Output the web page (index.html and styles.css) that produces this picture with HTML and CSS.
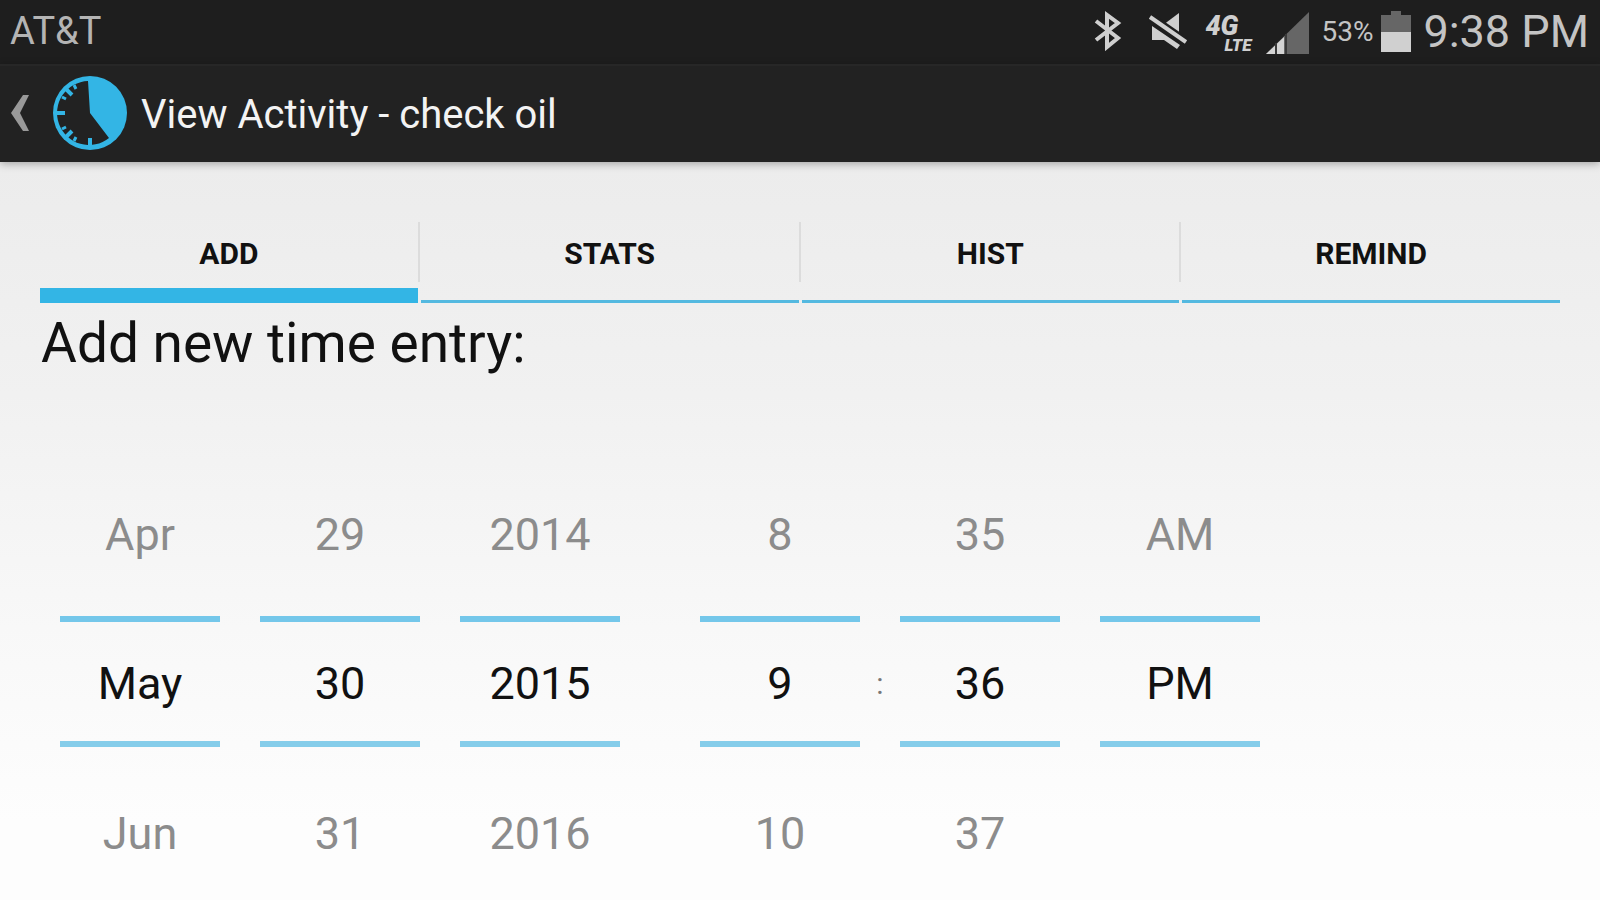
FILE: index.html
```html
<!DOCTYPE html>
<html lang="en">
<head>
    <meta charset="UTF-8">
    <meta name="viewport" content="width=device-width, initial-scale=1.0">
    <title>View Activity - check oil</title>
    <link rel="stylesheet" href="styles.css">
</head>
<body>
    <div class="status-bar">
        <span class="carrier">AT&amp;T</span>
        <div class="status-icons">
            <svg class="icon-bluetooth" width="28" height="40" viewBox="0 0 28 40" aria-label="Bluetooth">
                <path d="M2 10 L24 27 L13 36 L13 4 L24 12 L2 29" fill="none" stroke="#cfcfcf" stroke-width="4"/>
            </svg>
            <svg class="icon-mute" width="40" height="40" viewBox="0 0 40 40" aria-label="Muted">
                <path d="M15 14 L31 2 V24 Z" fill="#cfcfcf"/>
                <path d="M4 15 L32 34 L29 38 L16 29 H4 Z" fill="#cfcfcf"/>
                <path d="M2 6 L38 31" stroke="#1e1e1e" stroke-width="9"/>
                <path d="M2 6 L38 31" stroke="#cfcfcf" stroke-width="4"/>
            </svg>
            <div class="icon-lte">
                <span class="lte-big">4G</span>
                <span class="lte-small">LTE</span>
            </div>
            <svg class="icon-signal" width="43" height="42" viewBox="0 0 43 42" aria-label="Signal">
                <path d="M0 42 L43 0 V42 Z" fill="#666"/>
                <path d="M0 42 L18 25 V42 Z" fill="#d4d4d4"/>
                <path d="M10 31 V42 M20 22 V42" stroke="#3a3a3a" stroke-width="2"/>
            </svg>
            <span class="battery-level">53%</span>
            <svg class="icon-battery" width="30" height="44" viewBox="0 0 30 44" aria-label="Battery">
                <path d="M0 6 H10 V2 H20 V6 H30 V24 H0 Z" fill="#666"/>
                <path d="M0 23 H30 V43 H0 Z" fill="#d0d0d0"/>
            </svg>
            <span class="clock">9:38 PM</span>
        </div>
    </div>

    <header class="action-bar">
        <a href="#" class="up-link" aria-label="Navigate up">
            <svg width="20" height="40" viewBox="0 0 20 40">
                <path d="M13 2 H19 L10 20 L19 38 H13 L1 20 Z" fill="#999"/>
            </svg>
            <svg width="76" height="76" viewBox="0 0 76 76">
                <circle cx="38" cy="38" r="37" fill="#33b5e5"/>
                <path d="M38 38 L36 6 A32 32 0 1 0 57 63 Z" fill="#222"/>
                <path d="M38 71 V63 M14 62 L20 56 M5 38 H13 M14 14 L20 20" stroke="#33b5e5" stroke-width="4"/>
                <path d="M22 66 L24 62 M10 54 L14 52 M10 22 L14 24 M22 10 L24 14" stroke="#33b5e5" stroke-width="3"/>
            </svg>
        </a>
        <h1>View Activity - check oil</h1>
    </header>

    <main>
        <nav class="tabs">
            <button class="tab active" type="button">ADD</button>
            <button class="tab" type="button">STATS</button>
            <button class="tab" type="button">HIST</button>
            <button class="tab" type="button">REMIND</button>
        </nav>

        <h2>Add new time entry:</h2>

        <form class="pickers">
            <div class="picker-group">
                <div class="picker">
                    <button type="button">Apr</button>
                    <input type="text" value="May" aria-label="Month">
                    <button type="button">Jun</button>
                </div>
                <div class="picker">
                    <button type="button">29</button>
                    <input type="text" value="30" aria-label="Day">
                    <button type="button">31</button>
                </div>
                <div class="picker">
                    <button type="button">2014</button>
                    <input type="text" value="2015" aria-label="Year">
                    <button type="button">2016</button>
                </div>
            </div>
            <div class="picker-group time">
                <div class="picker">
                    <button type="button">8</button>
                    <input type="text" value="9" aria-label="Hour">
                    <button type="button">10</button>
                </div>
                <span class="colon">:</span>
                <div class="picker">
                    <button type="button">35</button>
                    <input type="text" value="36" aria-label="Minute">
                    <button type="button">37</button>
                </div>
                <div class="picker am-pm">
                    <button type="button">AM</button>
                    <input type="text" value="PM" aria-label="AM or PM">
                </div>
            </div>
        </form>
    </main>
</body>
</html>
```

FILE: styles.css
```css
* {
    box-sizing: border-box;
}
body {
    margin: 0;
    min-height: 100vh;
    display: flex;
    flex-direction: column;
    font-family: Roboto, sans-serif;
    background-color: #fdfdfd;
    color: #111;
}
button, input {
    font-family: inherit;
    border: none;
    background: none;
    padding: 0;
}
button {
    cursor: pointer;
}
svg {
    display: block;
}

/* phone status bar */
.status-bar {
    display: flex;
    justify-content: space-between;
    align-items: center;
    height: 64px;
    padding: 0 11px 2px 10px;
    background-color: #1e1e1e;
    color: #c4c4c4;
}
.carrier {
    font-size: 38px;
    color: #b4b4b4;
}
.status-icons {
    display: flex;
    align-items: center;
}
.icon-mute {
    margin-left: 26px;
}
.icon-lte {
    display: flex;
    flex-direction: column;
    width: 46px;
    margin-left: 17px;
    padding-top: 6px;
    color: #cfcfcf;
    font-weight: 900;
    font-style: italic;
}
.lte-big {
    font-size: 27px;
    line-height: 22px;
}
.lte-small {
    font-size: 17px;
    line-height: 16px;
    text-align: right;
}
.icon-signal {
    margin: 4px 0 0 15px;
}
.battery-level {
    margin-left: 12px;
    font-size: 28px;
}
.icon-battery {
    margin: 0 12px 0 8px;
}
.clock {
    font-size: 45px;
}

/* action bar */
.action-bar {
    display: flex;
    align-items: center;
    height: 98px;
    padding: 0 10px 2px;
    background-color: #222;
    border-top: 2px solid #272727;
    box-shadow: 0 2px 8px rgba(0, 0, 0, 0.3);
    z-index: 1;
}
.up-link {
    display: flex;
    align-items: center;
    gap: 22px;
}
h1 {
    margin: 2px 0 0 13px;
    font-size: 40px;
    font-weight: normal;
    color: #f3f3f3;
}

main {
    flex: 1;
    padding: 56px 40px 0;
    background: linear-gradient(#ececec, #f1f1f1 30%, #f8f8f8 60%, #fdfdfd 85%, #fdfdfd);
}

/* tabs */
.tabs {
    display: grid;
    grid-template-columns: repeat(4, 1fr);
    gap: 3px;
}
.tab {
    position: relative;
    height: 85px;
    padding-bottom: 12px;
    border-bottom: 3px solid #54b9e0;
    font-size: 30px;
    font-weight: bold;
    color: #111;
}
.tab.active {
    border-bottom: 15px solid #33b5e5;
    padding-bottom: 0;
}
.tab + .tab::before {
    content: "";
    position: absolute;
    left: -3px;
    top: 4px;
    width: 2px;
    height: 60px;
    background-color: #dcdcdc;
}

h2 {
    margin: 6px 0 0 1px;
    font-size: 55px;
    line-height: 68px;
    font-weight: normal;
}

/* date and time pickers */
.pickers {
    display: flex;
    gap: 80px;
    padding: 83px 20px 0;
}
.picker-group {
    display: flex;
    gap: 40px;
}
.picker-group.time {
    gap: 0;
}
.picker {
    display: flex;
    flex-direction: column;
    width: 160px;
}
.picker button {
    height: 156px;
    font-size: 45px;
    color: #8c8c8c;
}
.picker button:first-child {
    padding-bottom: 8px;
}
.picker button:last-child {
    padding-bottom: 18px;
    height: 190px;
}
.picker input {
    width: 100%;
    height: 131px;
    padding-top: 4px;
    border-top: 6px solid #74c7ea;
    border-bottom: 6px solid #85cdea;
    font-size: 45px;
    text-align: center;
    color: #111;
}
.colon {
    width: 40px;
    margin-top: 206px;
    font-size: 30px;
    line-height: 36px;
    text-align: center;
    color: #777;
}
.am-pm {
    margin-left: 40px;
}
```
